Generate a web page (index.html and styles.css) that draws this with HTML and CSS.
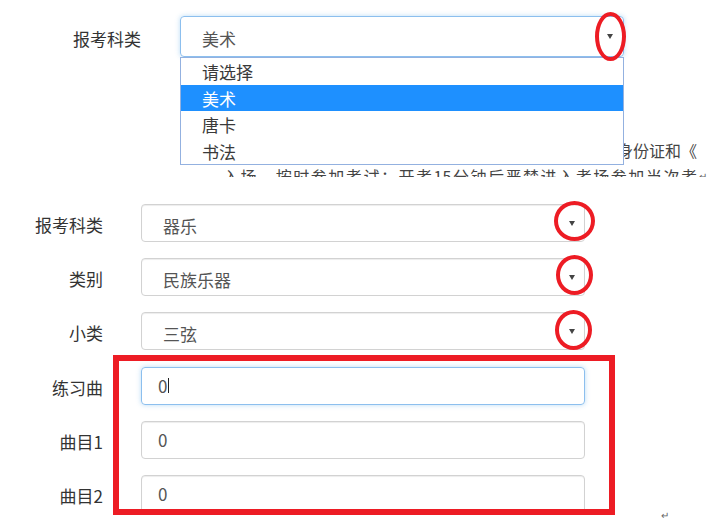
FILE: index.html
```html
<!DOCTYPE html>
<html lang="zh-CN">
<head>
    <meta charset="UTF-8">
    <meta name="viewport" content="width=device-width, initial-scale=1.0">
    <title>报考科类</title>
    <link rel="stylesheet" href="styles.css">
</head>
<body>
<div class="page">

<!-- 截图1：报考科类下拉框展开 -->
<div class="shot shot-top">
    <div class="top-row">
        <label class="top-label">报考科类</label>
        <div class="select select-focus">
            <span class="select-text">美术</span>
            <i class="caret"></i>
        </div>
    </div>
    <div class="notice">
        <div class="notice-line1">考生须提前30分钟持准考证、身份证和《</div>
        <div class="notice-line2">
            <span class="notice-text">入场，按时参加考试；开考15分钟后严禁进入考场参加当次考</span>
            <span class="mark">↵</span>
        </div>
    </div>
    <ul class="dropdown">
        <li>请选择</li>
        <li class="active">美术</li>
        <li>唐卡</li>
        <li>书法</li>
    </ul>
    <span class="ring ring-top"></span>
</div>

<!-- 截图2：器乐报名表单 -->
<div class="shot shot-bottom">
    <div class="form">
        <div class="form-row">
            <label>报考科类</label>
            <div class="select"><span class="select-text">器乐</span><i class="caret"></i></div>
        </div>
        <div class="form-row">
            <label>类别</label>
            <div class="select"><span class="select-text">民族乐器</span><i class="caret"></i></div>
        </div>
        <div class="form-row">
            <label>小类</label>
            <div class="select"><span class="select-text">三弦</span><i class="caret"></i></div>
        </div>
        <div class="form-row">
            <label>练习曲</label>
            <div class="input input-focus">0<span class="cursor"></span></div>
        </div>
        <div class="form-row">
            <label>曲目1</label>
            <div class="input">0</div>
        </div>
        <div class="form-row">
            <label>曲目2</label>
            <div class="input">0</div>
        </div>
    </div>

    <!-- 红色标注 -->
    <span class="ring ring-1"></span>
    <span class="ring ring-2"></span>
    <span class="ring ring-3"></span>
    <span class="box-mark"></span>
    <span class="mark mark-end">↵</span>
</div>

</div>
</body>
</html>
```

FILE: styles.css
```css
body {
    margin: 0;
    font-family: "Noto Sans CJK SC", "Microsoft YaHei", sans-serif;
    font-size: 17px;
    color: #333;
    background: #fff;
}
.page {
    width: 728px;
    height: 518px;
    overflow: hidden;
}
.shot {
    position: relative;
    overflow: hidden;
}

/* 截图1 */
.shot-top {
    height: 177px;
}
.top-row {
    display: flex;
    align-items: center;
    padding-top: 16px;
}
.top-label {
    width: 70px;
    margin-left: 73px;
    margin-right: 37px;
    padding-top: 3px;
}
.select {
    box-sizing: border-box;
    width: 444px;
    height: 38px;
    display: flex;
    align-items: center;
    justify-content: space-between;
    padding: 0 9px 0 21px;
    border: 1px solid #d2d2d2;
    border-radius: 4px;
    color: #555;
    box-shadow: inset 0 1px 1px rgba(0, 0, 0, 0.075);
}
.select-text {
    padding-top: 4px;
}
.select-focus {
    height: 41px;
    padding-right: 10px;
    border-color: #8cbfee;
    box-shadow: 0 0 5px rgba(102, 175, 233, 0.45);
}
.caret {
    width: 0;
    height: 0;
    border-left: 3.5px solid transparent;
    border-right: 3.5px solid transparent;
    border-top: 5px solid #444;
}
.notice {
    width: 484px;
    margin: 81px 0 0 223px;
    font-size: 16px;
    line-height: 24px;
    color: #444;
}
.notice-line1 {
    text-align: right;
    padding-right: 10px;
    white-space: nowrap;
}
.notice-line2 {
    display: flex;
    margin-top: 2px;
}
.notice-text {
    flex: 1;
    text-align: justify;
    text-align-last: justify;
}
.mark {
    font-size: 10px;
    color: #666;
    padding-left: 2px;
}
.dropdown {
    position: absolute;
    left: 180px;
    top: 57px;
    box-sizing: border-box;
    width: 444px;
    height: 108px;
    margin: 0;
    padding: 0;
    list-style: none;
    background: #fff;
    border: 1px solid #93b1e0;
}
.dropdown li {
    height: 26.5px;
    line-height: 28px;
    padding-left: 21px;
    color: #3a3a3a;
}
.dropdown li.active {
    background-color: #1e90ff;
    color: #fff;
}

/* 截图2 */
.shot-bottom {
    height: 341px;
}
.form {
    display: flex;
    flex-direction: column;
    gap: 16.2px;
    padding-top: 27px;
}
.form-row {
    display: flex;
    align-items: center;
}
.form-row label {
    width: 103px;
    margin-right: 38px;
    text-align: right;
    padding-top: 3px;
}
.input {
    box-sizing: border-box;
    width: 444px;
    height: 38px;
    display: flex;
    align-items: center;
    padding-left: 16px;
    border: 1px solid #d2d2d2;
    border-radius: 4px;
    color: #555;
    box-shadow: inset 0 1px 1px rgba(0, 0, 0, 0.075);
}
.input-focus {
    border-color: #8cbfee;
    box-shadow: 0 0 5px rgba(102, 175, 233, 0.45);
}
.cursor {
    display: inline-block;
    width: 0;
    height: 15px;
    margin-left: 1px;
    border-left: 1px solid #222;
}

/* 红色标注 */
.ring {
    position: absolute;
    box-sizing: border-box;
    border: 4.5px solid #ed1c24;
    border-radius: 50%;
}
.ring-top {
    left: 595px;
    top: 12px;
    width: 31px;
    height: 49px;
}
.ring-1 {
    left: 554px;
    top: 24px;
    width: 41px;
    height: 40px;
}
.ring-2 {
    left: 556px;
    top: 78px;
    width: 37px;
    height: 40px;
}
.ring-3 {
    left: 555px;
    top: 133px;
    width: 37px;
    height: 40px;
}
.box-mark {
    position: absolute;
    left: 113px;
    top: 178px;
    box-sizing: border-box;
    width: 502px;
    height: 160px;
    border: 6px solid #ed1c24;
}
.mark-end {
    position: absolute;
    left: 659px;
    top: 330px;
}
```
